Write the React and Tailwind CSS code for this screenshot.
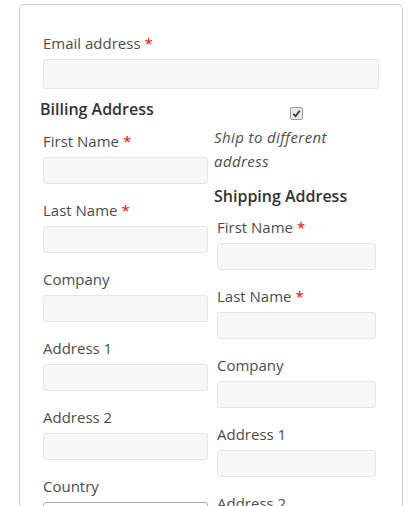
const billing = [
  { label: 'First Name', required: true },
  { label: 'Last Name', required: true },
  { label: 'Company' },
  { label: 'Address 1' },
  { label: 'Address 2' },
  { label: 'Country', select: true },
  { label: 'City' },
];

const shipping = [
  { label: 'First Name', required: true },
  { label: 'Last Name', required: true },
  { label: 'Company' },
  { label: 'Address 1' },
  { label: 'Address 2' },
  { label: 'Country', select: true },
];

function Field({ label, required, select }) {
  return (
    <div className="mb-[14px] px-[3px]">
      <label className="block text-[15px] leading-6 text-[#4d4d4d]">
        {label}
        {required && <span className="ml-1 text-[#f00]">*</span>}
      </label>
      {select ? (
        <div className="mt-1 h-[27px] w-full rounded-[3px] border border-[#a9a9a9] bg-white" />
      ) : (
        <div className="mt-1 h-[27px] w-full rounded-[3px] border border-[#e6e6e6] bg-[#f7f7f7]" />
      )}
    </div>
  );
}

function Checkbox() {
  return (
    <span className="flex h-[13px] w-[13px] items-center justify-center rounded-[2px] border border-[#9a9a9a] bg-[#e9e9e9]">
      <svg width="9" height="9" viewBox="0 0 10 10">
        <path d="M1.5 5.5 L4 8 L8.5 2" fill="none" stroke="#333" strokeWidth="2" />
      </svg>
    </span>
  );
}

export default function App() {
  return (
    <div className="h-screen overflow-hidden bg-white font-['Open_Sans',sans-serif]">
      <div className="ml-[19px] mt-[4px] w-[384px] rounded-[5px] border border-[#cccccc] px-5 pt-[26px] pb-5">
        <div className="px-[3px]">
          <label className="block text-[15px] leading-6 text-[#4d4d4d]">
            Email address <span className="text-[#f00]">*</span>
          </label>
          <div className="mt-1 h-[30px] w-full rounded-[3px] border border-[#e6e6e6] bg-[#f7f7f7]" />
        </div>

        <div className="mt-2 flex gap-[3px]">
          <div className="w-[171px]">
            <h3 className="mb-2 text-[16px] font-semibold leading-6 text-[#333]">Billing Address</h3>
            {billing.map((f) => (
              <Field key={f.label} {...f} />
            ))}
          </div>

          <div className="w-[165px]">
            <div className="flex justify-center pt-[10px] pb-[5px]">
              <Checkbox />
            </div>
            <p className="max-w-[140px] text-[15px] italic leading-6 tracking-[0.4px] text-[#4d4d4d]">
              Ship to different address
            </p>
            <h3 className="mt-[11px] mb-[7px] text-[16px] font-semibold leading-6 text-[#333]">
              Shipping Address
            </h3>
            {shipping.map((f) => (
              <Field key={f.label} {...f} />
            ))}
          </div>
        </div>
      </div>
    </div>
  );
}
